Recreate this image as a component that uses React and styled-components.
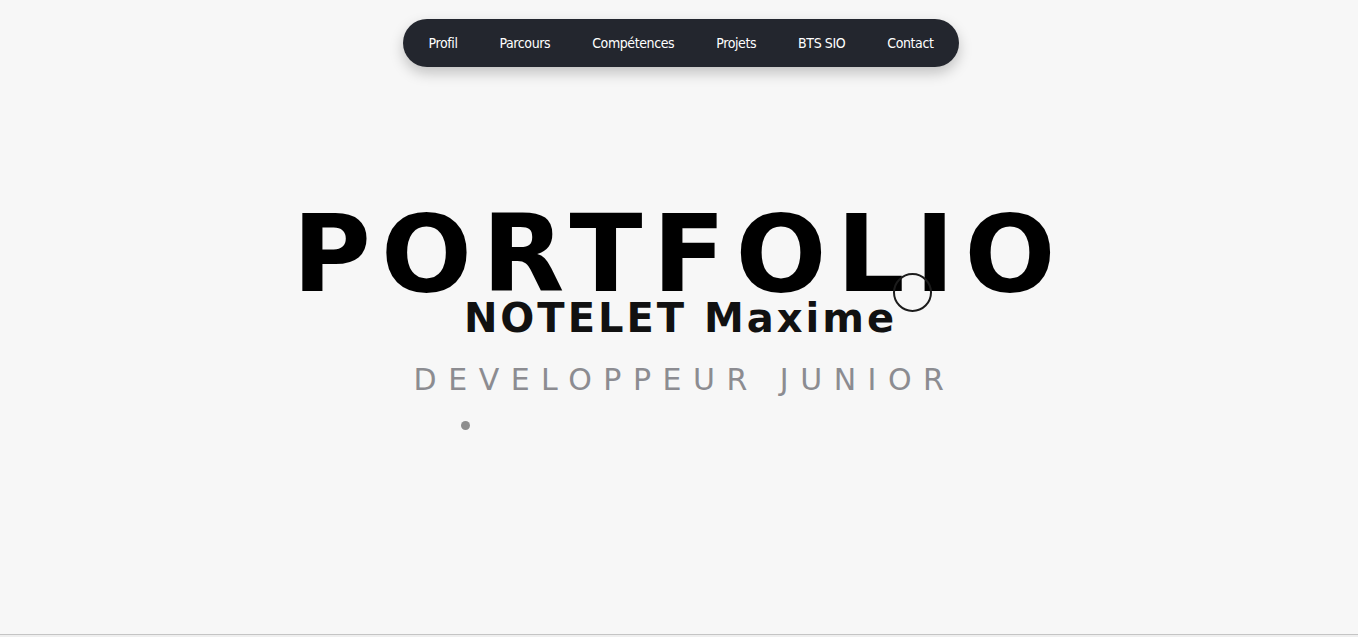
import React from "react";
import styled, { createGlobalStyle } from "styled-components";

const GlobalStyle = createGlobalStyle`
  html, body {
    margin: 0;
    padding: 0;
    background-color: #efefef;
  }
  * {
    box-sizing: border-box;
  }
`;

const Page = styled.div`
  position: relative;
  height: 635px;
  background-color: #f7f7f7;
  border-bottom: 1px solid #c4c4c4;
  overflow: hidden;
`;

const NavWrapp = styled.div`
  display: flex;
  justify-content: center;
  padding: 19px 0 0 4px;
`;

const Nav = styled.nav`
  display: flex;
  align-items: center;
  height: 48px;
  padding: 0 5px;
  border-radius: 24px;
  background-color: #23262e;
  box-shadow: 0 6px 14px rgba(0, 0, 0, 0.22);
`;

const NavLink = styled.a`
  padding: 0 21px;
  color: #ffffff;
  font-family: "DejaVu Sans Condensed", "DejaVu Sans", sans-serif;
  font-size: 14px;
  letter-spacing: -0.4px;
  text-decoration: none;
  line-height: 48px;
`;

const Hero = styled.section`
  display: flex;
  flex-direction: column;
  align-items: center;
  margin-top: 134px;
`;

const Title = styled.h1`
  margin: 0;
  font-family: "DejaVu Sans", sans-serif;
  font-weight: 700;
  font-size: 107px;
  line-height: 1;
  letter-spacing: 10px;
  color: #000000;
`;

const Name = styled.h2`
  margin: -10px 0 0;
  padding-left: 3px;
  font-family: "DejaVu Sans", sans-serif;
  font-weight: 700;
  font-size: 40px;
  line-height: 1;
  letter-spacing: 3px;
  color: #111111;
`;

const Job = styled.p`
  margin: 27px 0 0;
  padding-left: 11px;
  font-family: "DejaVu Sans", sans-serif;
  font-weight: 400;
  font-size: 30px;
  line-height: 1;
  letter-spacing: 11.5px;
  color: #8c8c91;
`;

const CursorRing = styled.div`
  position: absolute;
  left: 893px;
  top: 273px;
  width: 39px;
  height: 39px;
  border-radius: 50%;
  border: 2px solid #1c1c1c;
`;

const CursorDot = styled.div`
  position: absolute;
  left: 461px;
  top: 421px;
  width: 9px;
  height: 9px;
  border-radius: 50%;
  background-color: #8e8e8e;
`;

const links = ["Profil", "Parcours", "Compétences", "Projets", "BTS SIO", "Contact"];

export default function App() {
  return (
    <>
      <GlobalStyle />
      <Page>
        <NavWrapp>
          <Nav>
            {links.map((link) => (
              <NavLink key={link} href="#">
                {link}
              </NavLink>
            ))}
          </Nav>
        </NavWrapp>
        <Hero>
          <Title>PORTFOLIO</Title>
          <Name>NOTELET Maxime</Name>
          <Job>DEVELOPPEUR JUNIOR</Job>
        </Hero>
        <CursorRing />
        <CursorDot />
      </Page>
    </>
  );
}
